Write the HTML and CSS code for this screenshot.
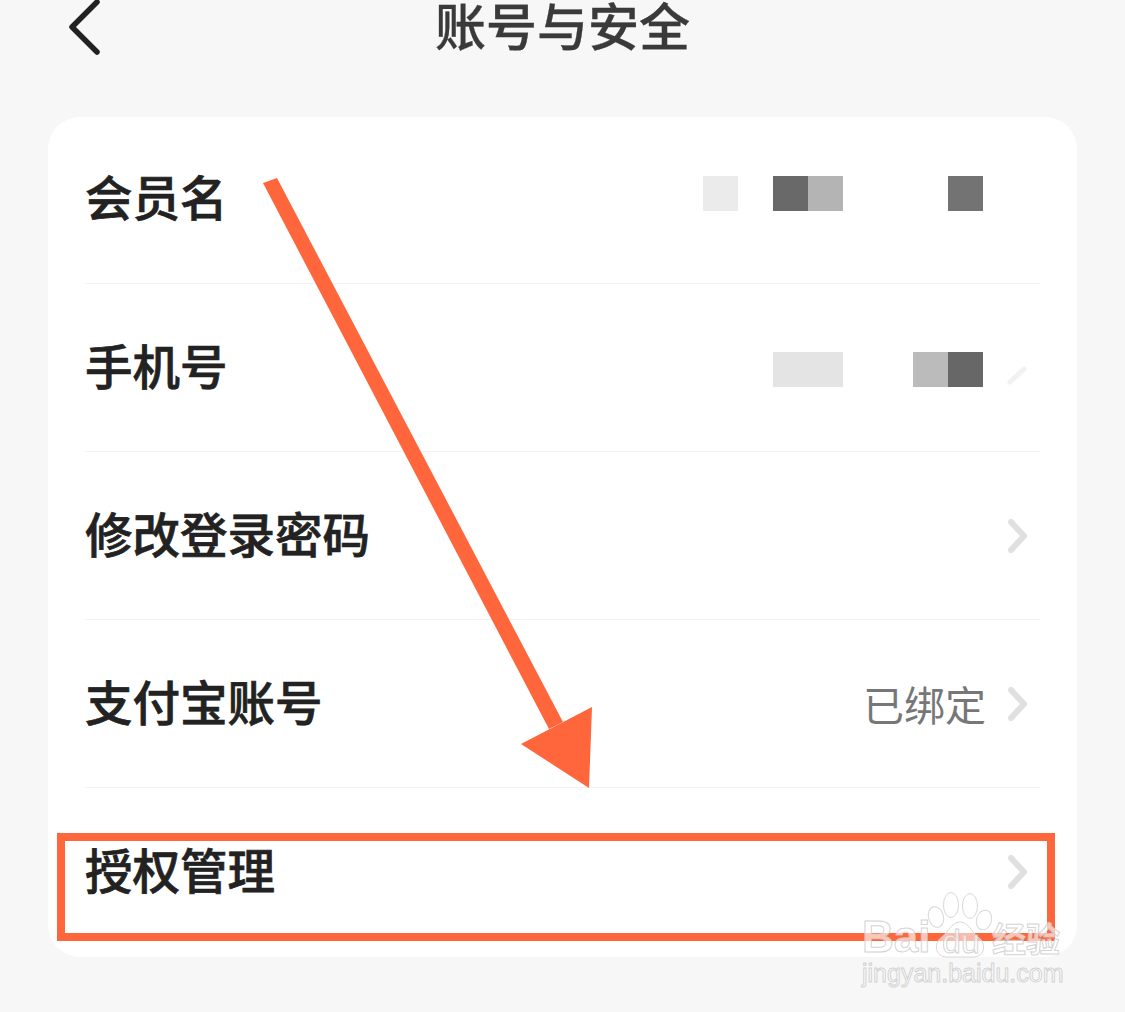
FILE: index.html
```html
<!DOCTYPE html>
<html lang="zh-CN">
<head>
<meta charset="utf-8">
<title>账号与安全</title>
<link rel="stylesheet" href="styles.css">
</head>
<body>
<div class="page">
  <header class="header">
    <svg class="back" width="36" height="56" viewBox="0 0 36 56"><path d="M30 2 L5 27 L30 52" fill="none" stroke="#222" stroke-width="5.5" stroke-linecap="round" stroke-linejoin="round"/></svg>
    <h1 class="title">账号与安全</h1>
  </header>
  <main class="card">
    <div class="row row-first">
      <span class="label">会员名</span>
      <div class="mosaic mosaic-up">
        <i class="cell c-eb"></i><i class="cell"></i><i class="cell c-69"></i><i class="cell c-b4"></i><i class="cell"></i><i class="cell"></i><i class="cell"></i><i class="cell c-73"></i>
      </div>
      <span class="chev-space"></span>
    </div>
    <div class="row">
      <span class="label">手机号</span>
      <div class="mosaic mosaic-down">
        <i class="cell"></i><i class="cell"></i><i class="cell c-e4"></i><i class="cell c-e4"></i><i class="cell"></i><i class="cell"></i><i class="cell c-bb"></i><i class="cell c-67"></i>
      </div>
      <svg class="chev" width="20" height="34" viewBox="0 0 20 34"><path d="M3 31 L17 18" fill="none" stroke="#f1f1f1" stroke-width="5" stroke-linecap="round"/></svg>
    </div>
    <div class="row">
      <span class="label">修改登录密码</span>
      <svg class="chev" width="20" height="34" viewBox="0 0 20 34"><path d="M4 3 L17 17 L4 31" fill="none" stroke="#e0e0e0" stroke-width="6" stroke-linecap="round" stroke-linejoin="round"/></svg>
    </div>
    <div class="row">
      <span class="label">支付宝账号</span>
      <span class="value">已绑定</span>
      <svg class="chev" width="20" height="34" viewBox="0 0 20 34"><path d="M4 3 L17 17 L4 31" fill="none" stroke="#e0e0e0" stroke-width="6" stroke-linecap="round" stroke-linejoin="round"/></svg>
    </div>
    <div class="row row-last">
      <span class="label">授权管理</span>
      <svg class="chev" width="20" height="34" viewBox="0 0 20 34"><path d="M4 3 L17 17 L4 31" fill="none" stroke="#e0e0e0" stroke-width="6" stroke-linecap="round" stroke-linejoin="round"/></svg>
    </div>
  </main>

  <svg class="arrow" width="1125" height="1012" viewBox="0 0 1125 1012">
    <polygon points="263,183 277,178 563,722 549,729" fill="#ff663c"/>
    <polygon points="592,707 521,744 589,788" fill="#ff663c"/>
  </svg>
  <div class="highlight"></div>

  <div class="watermark">
    <svg class="paw" width="70" height="68" viewBox="0 0 70 68">
      <g fill="rgba(255,255,255,.55)" stroke="#d8d8d8" stroke-width="1">
        <ellipse cx="9" cy="26" rx="7.5" ry="10.5" transform="rotate(-15 9 26)"/>
        <ellipse cx="24" cy="14" rx="7.5" ry="12.5"/>
        <ellipse cx="43" cy="15" rx="7.5" ry="12.5"/>
        <ellipse cx="57" cy="29" rx="7.5" ry="10" transform="rotate(15 57 29)"/>
        <path d="M33 31 C24 31 22 41 15 46 C6 52 8 66 20 66 L46 66 C58 66 60 52 51 46 C44 41 42 31 33 31 Z"/>
      </g>
    </svg>
    <span class="wm-bai">Bai</span>
    <span class="wm-du">du</span>
    <span class="wm-jy">经验</span>
    <span class="wm-url">jingyan.baidu.com</span>
  </div>
</div>
</body>
</html>
```
FILE: styles.css
```css
* { box-sizing: border-box; }
html, body { margin: 0; padding: 0; }
body {
  background: #f7f7f7;
  font-family: "Noto Sans CJK SC", "Liberation Sans", sans-serif;
  overflow: hidden;
}
.page {
  position: relative;
  width: 1125px;
  height: 1012px;
  padding: 0 48px;
  overflow: hidden;
}
.header {
  height: 117px;
  position: relative;
  display: flex;
  justify-content: center;
  align-items: flex-start;
}
.back {
  position: absolute;
  left: 19px;
  top: 0;
}
.title {
  margin: 0;
  font-size: 51px;
  font-weight: 500;
  line-height: 48px;
  color: #3a3a3a;
  -webkit-text-stroke: .3px #3a3a3a;
}
.card {
  width: 1029px;
  background: #fff;
  border-radius: 32px;
  padding: 0 37px 1px;
}
.row {
  height: 168px;
  display: flex;
  align-items: center;
  padding-right: 13px;
  border-bottom: 1px solid #f3f3f3;
}
.row-first { height: 167px; padding-bottom: 3px; }
.row-last { border-bottom: 0; }
.label {
  font-size: 47.5px;
  font-weight: 500;
  color: #222;
  -webkit-text-stroke: .7px #222;
  line-height: 60px;
  margin-right: auto;
  padding-bottom: 6px;
}
.value {
  font-size: 41px;
  color: #777;
  line-height: 50px;
  margin-right: 21px;
  padding-bottom: 2px;
}
.mosaic { display: flex; margin-right: 24px; }
.mosaic-up { margin-bottom: 10px; }
.mosaic-down { margin-top: 4px; }
.cell { display: block; width: 35px; height: 35px; }
.c-eb { background: #ebebeb; }
.c-69 { background: #696969; }
.c-b4 { background: #b4b4b4; }
.c-73 { background: #737373; }
.c-e4 { background: #e4e4e4; }
.c-bb { background: #bbbbbb; }
.c-67 { background: #676767; }
.chev, .chev-space { display: block; width: 20px; flex: none; }
.arrow { position: absolute; left: 0; top: 0; }
.highlight {
  position: absolute;
  left: 57px;
  top: 833px;
  width: 998px;
  height: 108px;
  border: 8px solid #ff663c;
}
.watermark {
  position: absolute;
  left: 0;
  top: 0;
  width: 1125px;
  height: 1012px;
  pointer-events: none;
}
.paw { position: absolute; left: 927px; top: 891px; }
.wm-bai, .wm-du, .wm-jy, .wm-url {
  position: absolute;
  font-family: "Liberation Sans", "Noto Sans CJK SC", sans-serif;
  color: rgba(255, 255, 255, .65);
  -webkit-text-stroke: 1px rgba(200, 200, 200, .8);
  white-space: nowrap;
}
.wm-bai { left: 862px; top: 914px; font-size: 44px; line-height: 46px; font-weight: 700; }
.wm-du { left: 942px; top: 922px; font-size: 34px; line-height: 38px; }
.wm-jy { left: 992px; top: 916px; font-size: 34px; line-height: 44px; font-family: "Noto Sans CJK SC", sans-serif; font-weight: 700; }
.wm-url { left: 862px; top: 958px; font-size: 25px; line-height: 30px; }
```
